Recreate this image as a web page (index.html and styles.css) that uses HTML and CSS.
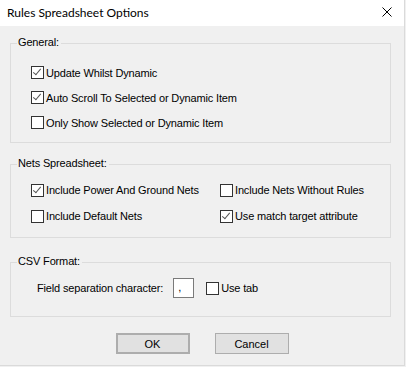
FILE: index.html
```html
<!DOCTYPE html>
<html lang="en">
<head>
  <meta charset="UTF-8">
  <title>Rules Spreadsheet Options</title>
  <link rel="stylesheet" href="styles.css">
</head>
<body>
  <div class="window">
    <div class="titlebar">
      <span class="title">Rules Spreadsheet Options</span>
      <svg class="close" width="10" height="10" viewBox="0 0 10 10">
        <path d="M0.5 0.5 L9.5 9.5 M9.5 0.5 L0.5 9.5" stroke="#000" stroke-width="1" fill="none"/>
      </svg>
    </div>

    <div class="content">
      <div class="group group-general">
        <span class="legend">General:</span>
        <div class="rows">
          <label class="check"><span class="box checked"></span>Update Whilst Dynamic</label>
          <label class="check"><span class="box checked"></span>Auto Scroll To Selected or Dynamic Item</label>
          <label class="check"><span class="box"></span>Only Show Selected or Dynamic Item</label>
        </div>
      </div>

      <div class="group group-nets">
        <span class="legend">Nets Spreadsheet:</span>
        <div class="rows two-col">
          <label class="check"><span class="box checked"></span>Include Power And Ground Nets</label>
          <label class="check"><span class="box"></span>Include Nets Without Rules</label>
          <label class="check"><span class="box"></span>Include Default Nets</label>
          <label class="check"><span class="box checked"></span>Use match target attribute</label>
        </div>
      </div>

      <div class="group group-csv">
        <span class="legend">CSV Format:</span>
        <div class="csv-row">
          <span class="field-label">Field separation character:</span>
          <span class="sep-input">,</span>
          <label class="check"><span class="box"></span>Use tab</label>
        </div>
      </div>

      <div class="buttons">
        <button class="btn btn-default">OK</button>
        <button class="btn">Cancel</button>
      </div>
    </div>
  </div>
</body>
</html>
```

FILE: styles.css
```css
html, body {
  margin: 0;
  padding: 0;
  background: #f0f0f0;
}

.window {
  width: 404px;
  height: 365px;
  border-right: 1px solid #dadada;
  border-bottom: 1px solid #dadada;
  background: #f0f0f0;
  font-family: "Liberation Sans", Arial, sans-serif;
  font-size: 11px;
  letter-spacing: -0.15px;
  color: #000;
}

.titlebar {
  height: 26px;
  background: #fff;
  display: flex;
  align-items: center;
  justify-content: space-between;
  padding: 0 12px 0 7px;
}

.title {
  font-family: Lato, "Noto Sans", sans-serif;
  font-size: 12px;
  letter-spacing: 0;
  margin-top: -2px;
}

.close {
  display: block;
  margin-top: -3px;
}

.content {
  padding: 17px 0 0 10px;
}

/* group boxes */
.group {
  width: 379px;
  border: 1px solid #dcdcdc;
}

.legend {
  display: block;
  width: max-content;
  line-height: 13px;
  height: 13px;
  margin: -8px 0 0 6px;
  padding: 0 2px 0 1px;
  background: #f0f0f0;
}

.group-general .rows {
  padding: 11px 0 7px 20px;
  display: grid;
  grid-auto-rows: 25px;
}

.group-nets {
  margin-top: 21px;
}

.group-nets .rows {
  padding: 7px 0 8px 20px;
  display: grid;
  grid-template-columns: 189px 1fr;
  grid-auto-rows: 26px;
}

.group-csv {
  margin-top: 24px;
}

.csv-row {
  display: flex;
  align-items: center;
  height: 20px;
  padding: 10px 0 18px 26px;
}

.field-label {
  margin-right: 10px;
}

.sep-input {
  box-sizing: border-box;
  width: 21px;
  height: 20px;
  border: 1px solid #7a7a7a;
  background: #fff;
  padding: 0 0 0 4px;
  line-height: 16px;
  margin-right: 12px;
}

/* checkboxes */
.check {
  display: flex;
  align-items: center;
  white-space: nowrap;
}

.box {
  box-sizing: border-box;
  width: 13px;
  height: 13px;
  border: 1px solid #333;
  background: #fff;
  margin-right: 2px;
  position: relative;
}

.box.checked::after {
  content: "";
  position: absolute;
  left: 3px;
  top: 0px;
  width: 3px;
  height: 7px;
  border-right: 1px solid #555;
  border-bottom: 1px solid #555;
  transform: rotate(40deg);
}

/* buttons */
.buttons {
  display: flex;
  justify-content: center;
  gap: 25px;
  margin-top: 16px;
  padding-right: 10px;
}

.btn {
  box-sizing: border-box;
  width: 74px;
  height: 21px;
  border: 1px solid #adadad;
  background: #e1e1e1;
  font-family: "Liberation Sans", Arial, sans-serif;
  font-size: 11px;
  color: #000;
  padding: 0;
  margin: 0;
}

.btn-default {
  border: 2px solid #adadad;
}
```
